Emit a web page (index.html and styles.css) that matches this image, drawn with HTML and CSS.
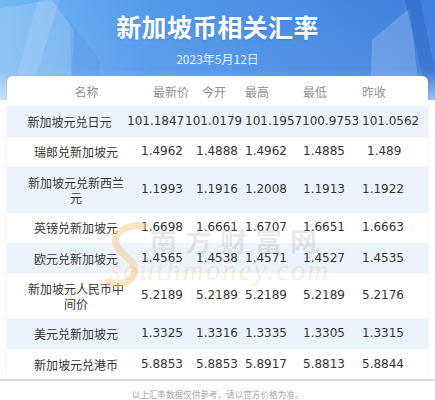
FILE: index.html
```html
<!DOCTYPE html>
<html lang="zh-CN">
<head>
<meta charset="utf-8">
<link rel="stylesheet" href="styles.css">
</head>
<body>
<div class="page">
  <header class="hero">
    <svg class="hero-bg" width="435" height="100" viewBox="0 0 435 100" aria-hidden="true">
      <defs>
        <linearGradient id="g1" x1="0" y1="0" x2="1" y2="0">
          <stop offset="0" stop-color="#72b6f3"/>
          <stop offset="0.35" stop-color="#5299ea"/>
          <stop offset="1" stop-color="#3f80de"/>
        </linearGradient>
        <linearGradient id="g2" x1="0" y1="0" x2="0" y2="1">
          <stop offset="0" stop-color="#ffffff" stop-opacity="0"/>
          <stop offset="0.7" stop-color="#ffffff" stop-opacity="0.05"/>
          <stop offset="1" stop-color="#ffffff" stop-opacity="0.55"/>
        </linearGradient>
      </defs>
      <rect width="435" height="100" fill="url(#g1)"/>
      <polygon points="0,8 52,0 74,30 70,100 0,100" fill="#ffffff" opacity="0.16"/>
      <polygon points="38,0 60,0 28,100 10,100" fill="#ffffff" opacity="0.12"/>
      <polygon points="70,22 100,60 98,100 72,100" fill="#2f6fcf" opacity="0.12"/>
      <polygon points="372,40 410,8 420,100 370,100" fill="#ffffff" opacity="0.18"/>
      <polygon points="405,0 420,0 435,70 435,100 428,100" fill="#2b66c4" opacity="0.55"/>
      <rect width="435" height="100" fill="url(#g2)"/>
    </svg>
    <h1 class="title">新加坡币相关汇率</h1>
    <p class="date">2023年5月12日</p>
  </header>

  <div class="board">
    <section class="card">
      <div class="row head">
        <span class="name">名称</span><span>最新价</span><span>今开</span><span>最高</span><span>最低</span><span>昨收</span>
      </div>
      <div class="row alt wide">
        <span class="name">新加坡元兑日元</span><span>101.1847</span><span>101.0179</span><span>101.1957</span><span>100.9753</span><span>101.0562</span>
      </div>
      <div class="row">
        <span class="name">瑞郎兑新加坡元</span><span>1.4962</span><span>1.4888</span><span>1.4962</span><span>1.4885</span><span class="nudge">1.489</span>
      </div>
      <div class="row alt">
        <span class="name">新加坡元兑新西兰元</span><span>1.1993</span><span>1.1916</span><span>1.2008</span><span>1.1913</span><span>1.1922</span>
      </div>
      <div class="row">
        <span class="name">英镑兑新加坡元</span><span>1.6698</span><span>1.6661</span><span>1.6707</span><span>1.6651</span><span>1.6663</span>
      </div>
      <div class="row alt">
        <span class="name">欧元兑新加坡元</span><span>1.4565</span><span>1.4538</span><span>1.4571</span><span>1.4527</span><span>1.4535</span>
      </div>
      <div class="row">
        <span class="name">新加坡元人民币中间价</span><span>5.2189</span><span>5.2189</span><span>5.2189</span><span>5.2189</span><span>5.2176</span>
      </div>
      <div class="row alt">
        <span class="name">美元兑新加坡元</span><span>1.3325</span><span>1.3316</span><span>1.3335</span><span>1.3305</span><span>1.3315</span>
      </div>
      <div class="row">
        <span class="name">新加坡元兑港币</span><span>5.8853</span><span>5.8853</span><span>5.8917</span><span>5.8813</span><span>5.8844</span>
      </div>

      <div class="watermark" aria-hidden="true">
        <svg class="wm-swoosh" width="46" height="70" viewBox="0 0 46 70">
          <path d="M40 6 C18 4 6 16 14 28 C20 38 34 40 30 54 C27 64 12 66 4 62" fill="none" stroke="#f6c98a" stroke-width="7" stroke-linecap="round" opacity="0.5"/>
        </svg>
        <div class="wm-text">
          <span class="wm-cn">南方财富网</span>
          <span class="wm-en">southmoney.com</span>
        </div>
      </div>
    </section>
  </div>

  <p class="note">以上汇率数据仅供参考，请以官方价格为准。</p>
</div>
</body>
</html>
```

FILE: styles.css
```css
* { box-sizing: border-box; }

html, body {
  margin: 0;
  padding: 0;
  background: #ffffff;
}

body {
  font-family: "DejaVu Sans", "Noto Sans CJK SC", sans-serif;
  color: #333333;
}

.page {
  width: 435px;
  height: 400px;
  overflow: hidden;
}

.hero {
  position: relative;
  height: 100px;
  text-align: center;
  color: #ffffff;
}

.hero-bg {
  position: absolute;
  left: 0;
  top: 0;
  display: block;
}

.title {
  position: relative;
  margin: 0;
  padding-top: 11px;
  font-family: "Noto Sans CJK SC", sans-serif;
  font-size: 25px;
  line-height: 30px;
  font-weight: 700;
  letter-spacing: 0.3px;
  text-shadow: 0 1px 2px rgba(30, 80, 160, 0.25);
}

.date {
  position: relative;
  margin: 10px 0 0;
  font-family: "Noto Sans CJK SC", sans-serif;
  font-size: 12px;
  line-height: 16px;
  color: #e6f0ff;
}

.board {
  margin-top: -24px;
  border-bottom: 2px solid #dadde2;
}

.card {
  position: relative;
  margin: 0 7px;
  background: #ffffff;
  border-radius: 6px 6px 0 0;
  box-shadow: 0 -1px 3px rgba(40, 90, 170, 0.12);
  overflow: hidden;
}

.row {
  display: grid;
  grid-template-columns: 134px 55px 49px 58px 59px 66px;
  align-items: center;
  padding: 7.7px 0;
  font-size: 12px;
  line-height: 15px;
  color: #333333;
  white-space: nowrap;
}

.row .name {
  white-space: normal;
  text-align: center;
  padding: 0 14px 0 18px;
  font-family: "Noto Sans CJK SC", sans-serif;
}

.row.alt {
  background: #edf3fc;
}

.row.wide {
  grid-template-columns: 120px 58px 60px 57px 60px 66px;
}

.row.wide .name {
  padding: 0 6px 0 11px;
}

.row.head {
  grid-template-columns: 146px 49px 43px 58px 59px 66px;
  font-family: "Noto Sans CJK SC", sans-serif;
  color: #8f8f8f;
}

.row.head .name {
  padding: 0 0 0 13px;
}

.nudge {
  padding-left: 5px;
}

.watermark {
  position: absolute;
  left: 103px;
  top: 150px;
  pointer-events: none;
}

.wm-swoosh {
  position: absolute;
  left: -6px;
  top: -6px;
  display: block;
}

.wm-text {
  position: relative;
  display: flex;
  flex-direction: column;
  align-items: flex-start;
}

.wm-cn {
  margin-left: 40px;
  font-family: "Noto Sans CJK SC", sans-serif;
  font-size: 27px;
  line-height: 30px;
  letter-spacing: 8px;
  color: rgba(150, 150, 150, 0.22);
  font-weight: 700;
}

.wm-en {
  font-family: "Liberation Serif", serif;
  font-style: italic;
  font-size: 29px;
  line-height: 28px;
  letter-spacing: 2px;
  color: rgba(240, 190, 120, 0.26);
}

.note {
  margin: 7px 0 0;
  text-align: center;
  font-family: "Noto Sans CJK SC", sans-serif;
  font-size: 8.6px;
  line-height: 12px;
  color: #a8a8a8;
}
```
